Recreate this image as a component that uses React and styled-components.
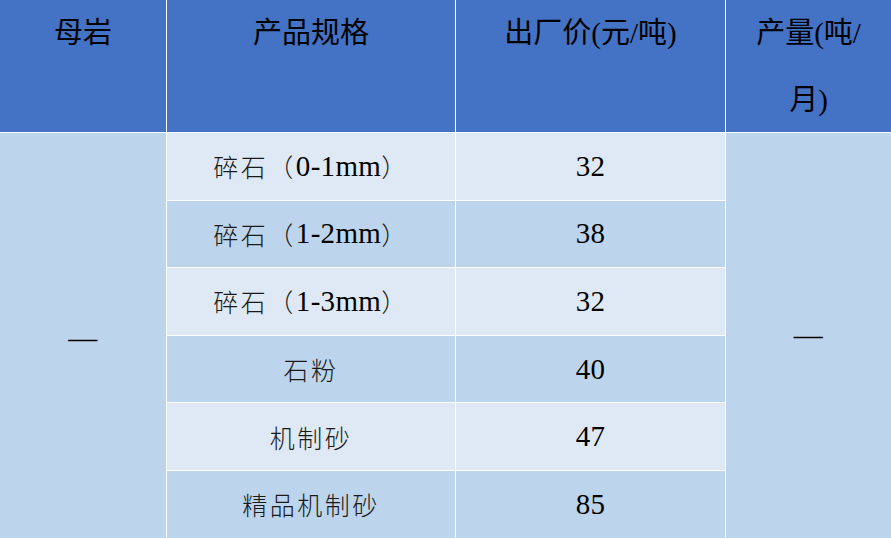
import React from "react";
import styled, { createGlobalStyle } from "styled-components";

const Global = createGlobalStyle`
  html, body { margin: 0; padding: 0; background: #ffffff; }
  body { overflow: hidden; }
`;

const Grid = styled.div`
  display: grid;
  width: 891px;
  grid-template-columns: 166px 288px 269px 165px;
  grid-template-rows: 132px repeat(6, 66.6px);
  gap: 1px;
  background: #ffffff;
`;

const HeadCell = styled.div`
  background: #4472c4;
  color: #000;
  font-family: "Liberation Serif", "Noto Sans CJK SC", sans-serif;
  font-size: 29px;
  line-height: 67px;
  text-align: center;
`;

const Cell = styled.div`
  grid-column: ${(p) => p.$col};
  background: ${(p) => (p.$light ? "#dee9f5" : "#bdd5ec")};
  color: #1a1a1a;
  font-family: "Noto Sans CJK SC", serif;
  font-weight: 300;
  font-size: 25px;
  letter-spacing: 2.5px;
  display: flex;
  align-items: center;
  justify-content: center;
`;

const Latin = styled.span`
  font-family: "Liberation Serif", serif;
  font-weight: 400;
  font-size: 29px;
  letter-spacing: 0.3px;
  color: #000;
`;

const MergedCell = styled(Cell)`
  grid-row: 2 / span 6;
  padding-top: ${(p) => p.$offset}px;
`;

const rows = [
  ["碎石（", "0-1mm", "）", "32"],
  ["碎石（", "1-2mm", "）", "38"],
  ["碎石（", "1-3mm", "）", "32"],
  ["石粉", "", "", "40"],
  ["机制砂", "", "", "47"],
  ["精品机制砂", "", "", "85"],
];

export default function App() {
  return (
    <>
      <Global />
      <Grid>
        <HeadCell>母岩</HeadCell>
        <HeadCell>产品规格</HeadCell>
        <HeadCell>出厂价(元/吨)</HeadCell>
        <HeadCell>
          产量(吨/
          <br />
          月)
        </HeadCell>
        <MergedCell $col={1} $offset={6}>
          <Latin>—</Latin>
        </MergedCell>
        {rows.map(([pre, latin, post, price], i) => (
          <React.Fragment key={i}>
            <Cell $light={i % 2 === 0} $col={2}>
              {pre}
              {latin && <Latin>{latin}</Latin>}
              {post}
            </Cell>
            <Cell $light={i % 2 === 0} $col={3}>
              <Latin>{price}</Latin>
            </Cell>
          </React.Fragment>
        ))}
        <MergedCell $col={4} $offset={-4}>
          <Latin>—</Latin>
        </MergedCell>
      </Grid>
    </>
  );
}
